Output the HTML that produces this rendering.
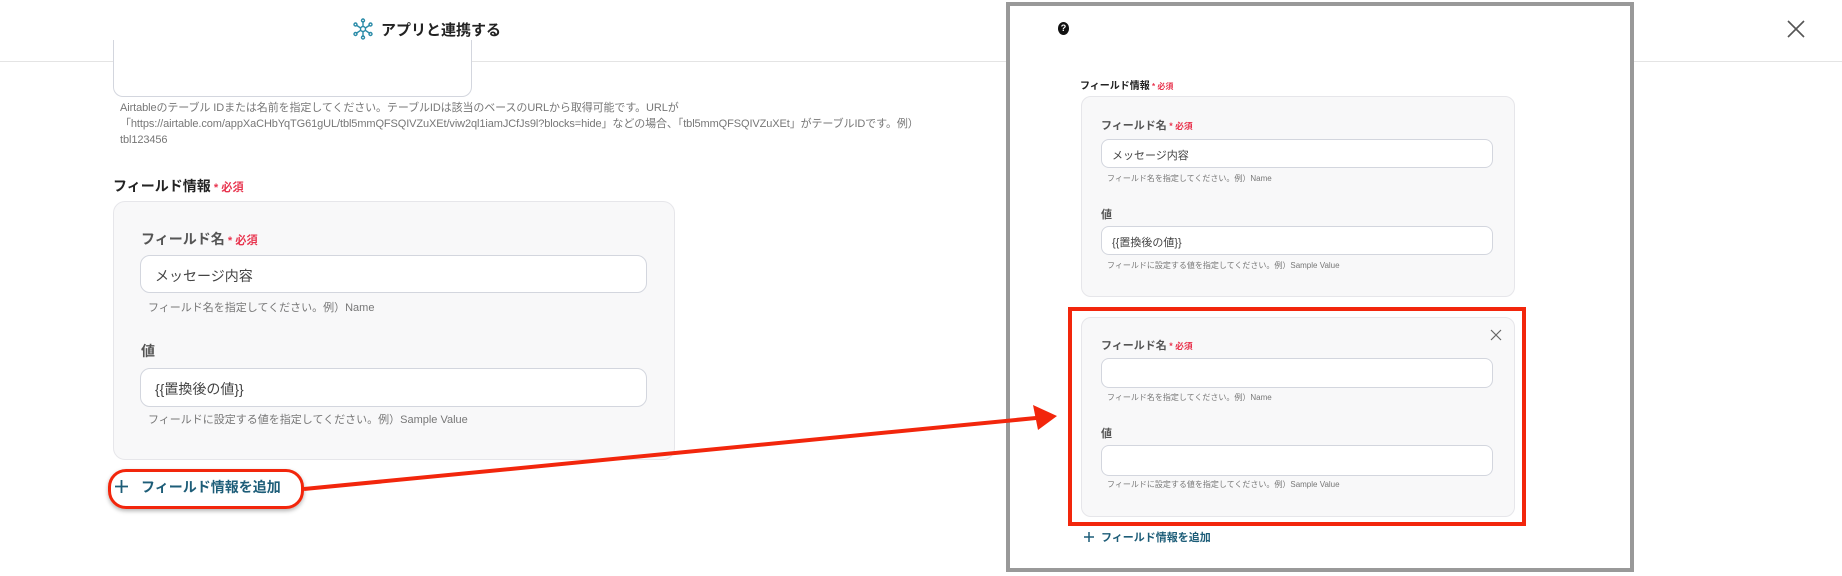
<!DOCTYPE html>
<html><head><meta charset="utf-8"><style>
*{box-sizing:border-box;margin:0;padding:0}
body{width:1842px;height:576px;background:#fff;position:relative;overflow:hidden;font-family:"Liberation Sans","Noto Sans CJK JP",sans-serif;color:#333}
.a{position:absolute;white-space:nowrap}
.req{color:#e8344e;font-size:0.8em;font-weight:bold}
.lbl{color:#555;font-weight:bold}
.inp{position:absolute;background:#fff;border:1px solid #d3d6de;border-radius:10px}
.card{position:absolute;background:#f8f8f9;border:1px solid #e6e6ea;border-radius:12px}
.help{color:#777}
</style></head><body>
<!-- header -->
<div class="a" style="left:0;top:61px;width:1842px;height:1px;background:#e4e4e4"></div>
<svg class="a" style="left:353px;top:18px" width="20" height="22" viewBox="0 0 20 22" fill="none" stroke="#2a8ba8" stroke-width="1.4">
<circle cx="10" cy="11" r="2.5"/><path d="M10 8.5V3M10 13.5V19M7.7 10L3 7M12.3 10L17 7M7.7 12.3L3 15.5M12.3 12.3L17 15.5"/>
<circle cx="10" cy="2.5" r="1.5"/><circle cx="2.5" cy="6.5" r="1.5"/><circle cx="17.5" cy="6.5" r="1.5"/><circle cx="2.5" cy="16" r="1.5"/><circle cx="17.5" cy="16" r="1.5"/><circle cx="10" cy="19.5" r="1.5"/></svg>
<div class="a" style="left:381px;top:19px;font-size:15px;font-weight:bold;color:#222">アプリと連携する</div>
<svg class="a" style="left:1787px;top:20px" width="18" height="18" viewBox="0 0 18 18" stroke="#555" stroke-width="1.6"><path d="M1 1L17 17M17 1L1 17"/></svg>

<!-- left form -->
<div class="inp" style="left:113px;top:40px;width:359px;height:57px;border-top:none;border-radius:0 0 10px 10px"></div>
<div class="a help" style="left:120px;top:100px;font-size:11px;line-height:16px;letter-spacing:-0.1px">Airtableのテーブル IDまたは名前を指定してください。テーブルIDは該当のベースのURLから取得可能です。URLが<br>「https://airtable.com/appXaCHbYqTG61gUL/tbl5mmQFSQIVZuXEt/viw2ql1iamJCfJs9l?blocks=hide」などの場合、「tbl5mmQFSQIVZuXEt」がテーブルIDです。例）<br>tbl123456</div>
<div class="a" style="left:113px;top:176px;font-size:14px;font-weight:bold;color:#222">フィールド情報<span class="req"> * 必須</span></div>
<div class="card" style="left:113px;top:201px;width:562px;height:259px"></div>
<div class="a lbl" style="left:141px;top:229px;font-size:14px">フィールド名<span class="req"> * 必須</span></div>
<div class="inp" style="left:140px;top:255px;width:507px;height:38px"></div>
<div class="a" style="left:155px;top:266px;font-size:14px;color:#444">メッセージ内容</div>
<div class="a help" style="left:148px;top:299px;font-size:11px">フィールド名を指定してください。例）Name</div>
<div class="a lbl" style="left:141px;top:341px;font-size:14px">値</div>
<div class="inp" style="left:140px;top:368px;width:507px;height:39px"></div>
<div class="a" style="left:155px;top:379px;font-size:14px;color:#444">{{置換後の値}}</div>
<div class="a help" style="left:148px;top:411px;font-size:11px">フィールドに設定する値を指定してください。例）Sample Value</div>
<div class="a" style="left:108px;top:469px;width:196px;height:40px;border:3px solid #f2260c;border-radius:18px;box-shadow:0 2px 4px rgba(0,0,0,.3)"></div>
<svg class="a" style="left:115px;top:480px" width="13" height="13" viewBox="0 0 13 13" stroke="#1d5d78" stroke-width="1.8"><path d="M6.5 0V13M0 6.5H13"/></svg>
<div class="a" style="left:141px;top:477px;font-size:14px;font-weight:bold;color:#1d5d78">フィールド情報を追加</div>

<!-- right screenshot -->
<div class="a" style="left:1006px;top:2px;width:628px;height:570px;border:4px solid #999;background:#fff"></div>
<div class="a" style="left:1058px;top:22px;width:11px;height:13px;border-radius:50%;background:#111;color:#fff;font-size:9px;font-weight:bold;text-align:center;line-height:13px">?</div>
<div class="a" style="left:1080px;top:77px;font-size:10px;font-weight:bold;color:#222">フィールド情報<span class="req"> * 必須</span></div>
<div class="card" style="left:1081px;top:96px;width:434px;height:201px;border-radius:10px"></div>
<div class="a lbl" style="left:1101px;top:117px;font-size:11px">フィールド名<span class="req"> * 必須</span></div>
<div class="inp" style="left:1101px;top:139px;width:392px;height:29px;border-radius:8px"></div>
<div class="a" style="left:1112px;top:147px;font-size:11px;color:#444">メッセージ内容</div>
<div class="a help" style="left:1107px;top:173px;font-size:8px">フィールド名を指定してください。例）Name</div>
<div class="a lbl" style="left:1101px;top:206px;font-size:11px">値</div>
<div class="inp" style="left:1101px;top:226px;width:392px;height:29px;border-radius:8px"></div>
<div class="a" style="left:1112px;top:234px;font-size:11px;color:#444">{{置換後の値}}</div>
<div class="a help" style="left:1107px;top:260px;font-size:8px">フィールドに設定する値を指定してください。例）Sample Value</div>

<div class="card" style="left:1081px;top:317px;width:434px;height:200px;border-radius:10px"></div>
<div class="a" style="left:1068px;top:307px;width:458px;height:219px;border:4px solid #f2260c"></div>
<svg class="a" style="left:1490px;top:329px" width="12" height="12" viewBox="0 0 12 12" stroke="#666" stroke-width="1.2"><path d="M1 1L11 11M11 1L1 11"/></svg>
<div class="a lbl" style="left:1101px;top:337px;font-size:11px">フィールド名<span class="req"> * 必須</span></div>
<div class="inp" style="left:1101px;top:358px;width:392px;height:30px;border-radius:8px"></div>
<div class="a help" style="left:1107px;top:392px;font-size:8px">フィールド名を指定してください。例）Name</div>
<div class="a lbl" style="left:1101px;top:425px;font-size:11px">値</div>
<div class="inp" style="left:1101px;top:445px;width:392px;height:31px;border-radius:8px"></div>
<div class="a help" style="left:1107px;top:479px;font-size:8px">フィールドに設定する値を指定してください。例）Sample Value</div>
<svg class="a" style="left:1084px;top:532px" width="10" height="10" viewBox="0 0 10 10" stroke="#1d5d78" stroke-width="1.5"><path d="M5 0V10M0 5H10"/></svg>
<div class="a" style="left:1101px;top:529px;font-size:11px;font-weight:bold;color:#1d5d78">フィールド情報を追加</div>

<!-- arrow on top -->
<svg class="a" style="left:0;top:0" width="1842" height="576"><path d="M304 489L1036 418" stroke="#f2260c" stroke-width="4"/><path d="M1057 416L1033 405L1038 430Z" fill="#f2260c"/></svg>
</body></html>
